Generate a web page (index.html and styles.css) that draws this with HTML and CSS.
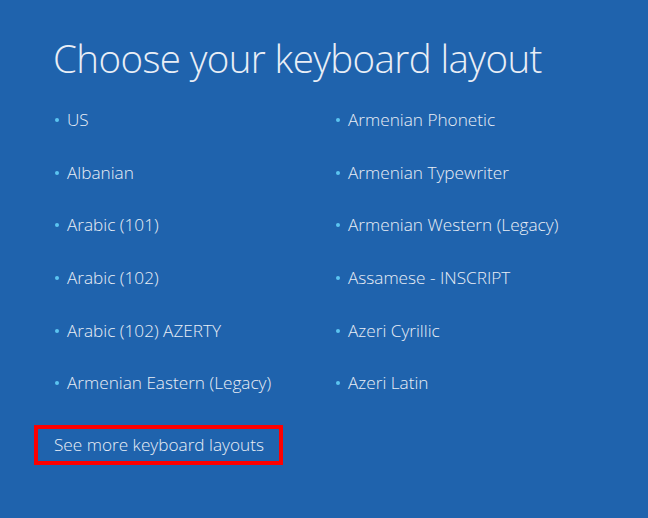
FILE: index.html
```html
<!DOCTYPE html>
<html>
<head>
<meta charset="utf-8">
<link rel="stylesheet" href="styles.css">
</head>
<body>
<div class="page">
  <h1 class="title">Choose your keyboard layout</h1>
  <div class="grid">
    <div class="item"><span class="dot"></span>US</div>
    <div class="item"><span class="dot"></span>Armenian Phonetic</div>
    <div class="item"><span class="dot"></span>Albanian</div>
    <div class="item"><span class="dot"></span>Armenian Typewriter</div>
    <div class="item"><span class="dot"></span>Arabic (101)</div>
    <div class="item"><span class="dot"></span>Armenian Western (Legacy)</div>
    <div class="item"><span class="dot"></span>Arabic (102)</div>
    <div class="item"><span class="dot"></span>Assamese - INSCRIPT</div>
    <div class="item"><span class="dot"></span>Arabic (102) AZERTY</div>
    <div class="item"><span class="dot"></span>Azeri Cyrillic</div>
    <div class="item"><span class="dot"></span>Armenian Eastern (Legacy)</div>
    <div class="item"><span class="dot"></span>Azeri Latin</div>
  </div>
  <div class="more">See more keyboard layouts</div>
</div>
</body>
</html>
```
FILE: styles.css
```css
html, body {
  margin: 0;
  padding: 0;
  background: #1f63ad;
  width: 648px;
  height: 518px;
  overflow: hidden;
}
.page {
  padding: 31px 0 0 53px;
  font-family: "Open Sans", "Noto Sans", sans-serif;
  color: #e9eef6;
}
.title {
  margin: 0;
  font-size: 38.5px;
  font-weight: 300;
  line-height: 54px;
  letter-spacing: -0.6px;
}
.grid {
  margin-top: 22px;
  display: grid;
  grid-template-columns: 281px 1fr;
  grid-auto-rows: 52.7px;
}
.item {
  display: flex;
  align-items: center;
  font-size: 17.2px;
  font-weight: 350;
  height: 26px;
  line-height: 26px;
  white-space: nowrap;
}
.dot {
  width: 4px;
  height: 4px;
  border-radius: 50%;
  background: #5cc4f0;
  margin: 0 8px 0 2px;
}
.more {
  box-sizing: border-box;
  margin: 2px 0 0 -19px;
  border: 4px solid #f00;
  padding: 0 16px;
  width: 249px;
  height: 40px;
  line-height: 32px;
  font-size: 17.2px;
  font-weight: 350;
  white-space: nowrap;
}
```
